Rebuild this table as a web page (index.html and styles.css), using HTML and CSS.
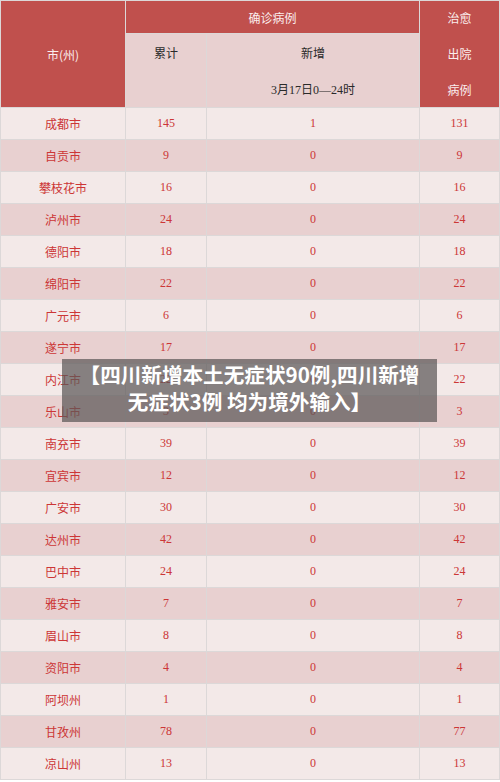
FILE: index.html
```html
<!DOCTYPE html>
<html lang="zh">
<head>
<meta charset="utf-8">
<link rel="stylesheet" href="styles.css">
</head>
<body>
<div class="page">
  <div class="table">
    <div class="h h-city">市(州)</div>
    <div class="h h-confirm">确诊病例</div>
    <div class="h h-cure">治愈<br>出院<br>病例</div>
    <div class="sub sub-total">累计</div>
    <div class="sub sub-new">新增<br>3月17日0—24时</div>

    <div class="c name l">成都市</div><div class="c l">145</div><div class="c l">1</div><div class="c l">131</div>
    <div class="c name d">自贡市</div><div class="c d">9</div><div class="c d">0</div><div class="c d">9</div>
    <div class="c name l">攀枝花市</div><div class="c l">16</div><div class="c l">0</div><div class="c l">16</div>
    <div class="c name d">泸州市</div><div class="c d">24</div><div class="c d">0</div><div class="c d">24</div>
    <div class="c name l">德阳市</div><div class="c l">18</div><div class="c l">0</div><div class="c l">18</div>
    <div class="c name d">绵阳市</div><div class="c d">22</div><div class="c d">0</div><div class="c d">22</div>
    <div class="c name l">广元市</div><div class="c l">6</div><div class="c l">0</div><div class="c l">6</div>
    <div class="c name d">遂宁市</div><div class="c d">17</div><div class="c d">0</div><div class="c d">17</div>
    <div class="c name l">内江市</div><div class="c l">22</div><div class="c l">0</div><div class="c l">22</div>
    <div class="c name d">乐山市</div><div class="c d">3</div><div class="c d">0</div><div class="c d">3</div>
    <div class="c name l">南充市</div><div class="c l">39</div><div class="c l">0</div><div class="c l">39</div>
    <div class="c name d">宜宾市</div><div class="c d">12</div><div class="c d">0</div><div class="c d">12</div>
    <div class="c name l">广安市</div><div class="c l">30</div><div class="c l">0</div><div class="c l">30</div>
    <div class="c name d">达州市</div><div class="c d">42</div><div class="c d">0</div><div class="c d">42</div>
    <div class="c name l">巴中市</div><div class="c l">24</div><div class="c l">0</div><div class="c l">24</div>
    <div class="c name d">雅安市</div><div class="c d">7</div><div class="c d">0</div><div class="c d">7</div>
    <div class="c name l">眉山市</div><div class="c l">8</div><div class="c l">0</div><div class="c l">8</div>
    <div class="c name d">资阳市</div><div class="c d">4</div><div class="c d">0</div><div class="c d">4</div>
    <div class="c name l">阿坝州</div><div class="c l">1</div><div class="c l">0</div><div class="c l">1</div>
    <div class="c name d">甘孜州</div><div class="c d">78</div><div class="c d">0</div><div class="c d">77</div>
    <div class="c name l">凉山州</div><div class="c l">13</div><div class="c l">0</div><div class="c l">13</div>
  </div>
  <div class="caption">【四川新增本土无症状90例,四川新增<br>无症状3例 均为境外输入】</div>
</div>
</body>
</html>
```

FILE: styles.css
```css
html, body {
  margin: 0;
  padding: 0;
  background: #ffffff;
}

.page {
  position: relative;
  width: 500px;
  height: 782px;
  overflow: hidden;
}

.table {
  display: grid;
  grid-template-columns: 124px 80px 212px 79px;
  grid-template-rows: 32px 73px repeat(21, 31px);
  gap: 1px;
  padding: 1px;
  background: #dcd8d8;
  font-family: "Liberation Serif", "Noto Sans CJK SC", serif;
  font-size: 12px;
}

.h {
  background: #c0504d;
  color: #fbeeee;
  font-family: "Noto Sans CJK SC", sans-serif;
  display: flex;
  align-items: center;
  justify-content: center;
  text-align: center;
}

.h-city {
  grid-column: 1;
  grid-row: 1 / 3;
}

.h-confirm {
  grid-column: 2 / 4;
  grid-row: 1;
}

.h-cure {
  grid-column: 4;
  grid-row: 1 / 3;
  line-height: 36px;
}

.sub {
  background: #e8d0d0;
  color: #2a2a2a;
  text-align: center;
  line-height: 36px;
}

.sub-total {
  grid-column: 2;
  grid-row: 2;
  font-family: "Noto Sans CJK SC", sans-serif;
  padding-top: 1px;
}

.sub-new {
  grid-column: 3;
  grid-row: 2;
  display: flex;
  align-items: center;
  justify-content: center;
  padding-top: 2px;
}

.c {
  display: flex;
  align-items: center;
  justify-content: center;
  color: #cc3636;
}

.name {
  font-family: "Noto Sans CJK SC", sans-serif;
}

.l {
  background: #f3e9e8;
}

.d {
  background: #e8d0d0;
}

.caption {
  position: absolute;
  left: 62px;
  top: 359px;
  width: 375px;
  height: 63px;
  box-sizing: border-box;
  background: rgba(92, 88, 88, 0.72);
  color: #ffffff;
  font-family: "Noto Sans CJK SC", sans-serif;
  font-weight: bold;
  font-size: 20.6px;
  line-height: 27px;
  text-align: center;
  padding-top: 2px;
  white-space: nowrap;
}
```
